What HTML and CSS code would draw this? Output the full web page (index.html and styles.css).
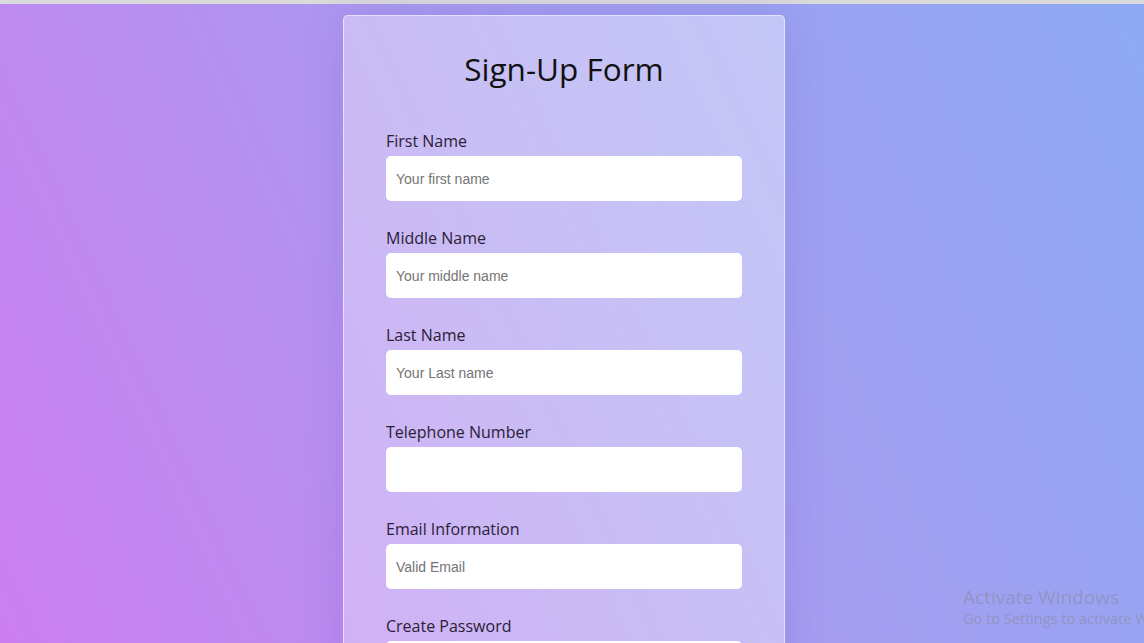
FILE: index.html
```html
<!DOCTYPE html>
<html lang="en">
<head>
<meta charset="utf-8">
<title>Sign-Up Form</title>
<link rel="stylesheet" href="styles.css">
</head>
<body>
<div class="topbar"></div>
<main class="page">
  <form class="card">
    <h1 class="title">Sign-Up Form</h1>
    <div class="field">
      <label class="label" for="fn">First Name</label>
      <input class="input" id="fn" type="text" placeholder="Your first name">
    </div>
    <div class="field">
      <label class="label" for="mn">Middle Name</label>
      <input class="input" id="mn" type="text" placeholder="Your middle name">
    </div>
    <div class="field">
      <label class="label" for="ln">Last Name</label>
      <input class="input" id="ln" type="text" placeholder="Your Last name">
    </div>
    <div class="field">
      <label class="label" for="tel">Telephone Number</label>
      <input class="input" id="tel" type="tel">
    </div>
    <div class="field">
      <label class="label" for="em">Email Information</label>
      <input class="input" id="em" type="email" placeholder="Valid Email">
    </div>
    <div class="field">
      <label class="label" for="pw">Create Password</label>
      <input class="input" id="pw" type="password">
    </div>
  </form>
</main>
<div class="watermark">
  <div class="wm-title">Activate Windows</div>
  <div class="wm-sub">Go to Settings to activate Windows.</div>
</div>
</body>
</html>
```

FILE: styles.css
```css
html, body {
  margin: 0;
  padding: 0;
  height: 100%;
  overflow: hidden;
}
body {
  font-family: "Open Sans", "Noto Sans", sans-serif;
  background: linear-gradient(65deg, #cc7ef0 0%, #a99af0 50%, #8eaaf4 100%);
  display: flex;
  flex-direction: column;
}
.topbar {
  height: 4px;
  background: #dadada;
  flex: none;
}
.page {
  display: flex;
  justify-content: center;
  padding-top: 11px;
  padding-right: 16px;
}
.card {
  width: 356px;
  padding: 29px 42px 40px;
  border: 1px solid rgba(255, 255, 255, 0.55);
  border-radius: 5px;
  background: linear-gradient(65deg, rgba(255,255,255,0.32), rgba(255,255,255,0.4));
  box-shadow: 0 0 40px rgba(90, 70, 190, 0.18);
}
.title {
  margin: 0 0 37px;
  text-align: center;
  font-weight: 400;
  font-size: 31.5px;
  line-height: 48px;
  color: #111;
}
.field {
  display: flex;
  flex-direction: column;
  margin-bottom: 26px;
}
.label {
  font-size: 16px;
  line-height: 22px;
  color: #2a2135;
  margin-bottom: 4px;
}
.input {
  box-sizing: border-box;
  width: 356px;
  height: 45px;
  border: none;
  border-radius: 5px;
  background: #fff;
  padding: 0 10px;
  font-family: "Liberation Sans", Arial, sans-serif;
  font-size: 14px;
  color: #333;
  outline: none;
}
.input::placeholder {
  color: #757575;
}
.watermark {
  position: fixed;
  left: 963px;
  top: 584px;
  font-family: "Open Sans", "Noto Sans", sans-serif;
  color: rgba(135, 135, 150, 0.5);
  white-space: nowrap;
}
.wm-title {
  font-size: 19px;
  line-height: 26px;
}
.wm-sub {
  font-size: 14.5px;
  line-height: 18px;
}
```
